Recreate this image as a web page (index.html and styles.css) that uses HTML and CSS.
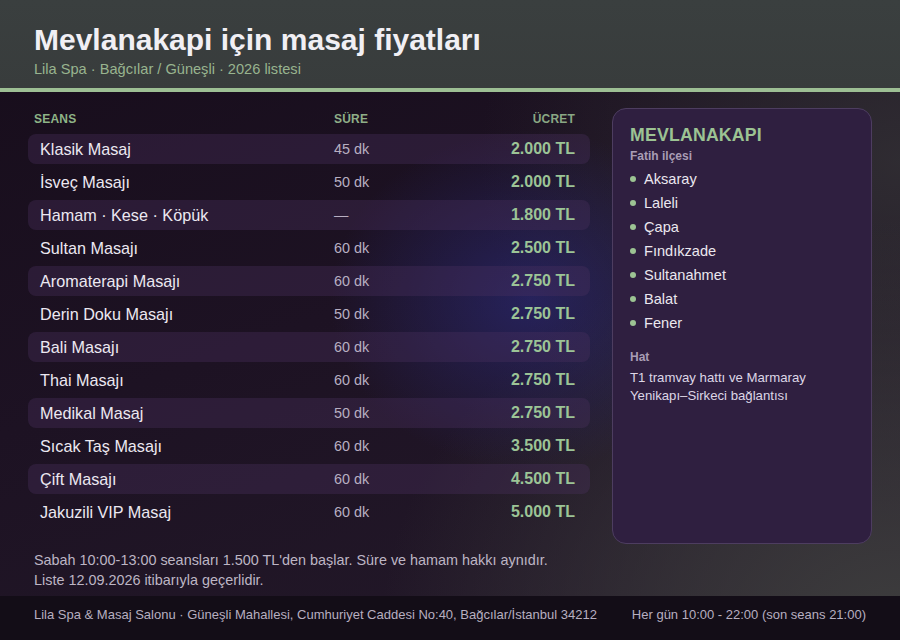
FILE: index.html
```html
<!DOCTYPE html>
<html lang="tr">
<head>
<meta charset="utf-8">
<title>Mevlanakapi için masaj fiyatları</title>
<link rel="stylesheet" href="styles.css">
</head>
<body>
<div class="page">
  <header class="top">
    <h1 class="title">Mevlanakapi için masaj fiyatları</h1>
    <p class="subtitle">Lila Spa · Bağcılar / Güneşli · 2026 listesi</p>
  </header>
  <main class="main">
    <div class="grid">
      <section class="prices">
        <div class="thead">
          <span class="c-name">SEANS</span>
          <span class="c-dur">SÜRE</span>
          <span class="c-price">ÜCRET</span>
        </div>
        <div class="rows">
          <div class="row alt"><span class="c-name">Klasik Masaj</span><span class="c-dur">45 dk</span><span class="c-price">2.000 TL</span></div>
          <div class="row"><span class="c-name">İsveç Masajı</span><span class="c-dur">50 dk</span><span class="c-price">2.000 TL</span></div>
          <div class="row alt"><span class="c-name">Hamam · Kese · Köpük</span><span class="c-dur">—</span><span class="c-price">1.800 TL</span></div>
          <div class="row"><span class="c-name">Sultan Masajı</span><span class="c-dur">60 dk</span><span class="c-price">2.500 TL</span></div>
          <div class="row alt"><span class="c-name">Aromaterapi Masajı</span><span class="c-dur">60 dk</span><span class="c-price">2.750 TL</span></div>
          <div class="row"><span class="c-name">Derin Doku Masajı</span><span class="c-dur">50 dk</span><span class="c-price">2.750 TL</span></div>
          <div class="row alt"><span class="c-name">Bali Masajı</span><span class="c-dur">60 dk</span><span class="c-price">2.750 TL</span></div>
          <div class="row"><span class="c-name">Thai Masajı</span><span class="c-dur">60 dk</span><span class="c-price">2.750 TL</span></div>
          <div class="row alt"><span class="c-name">Medikal Masaj</span><span class="c-dur">50 dk</span><span class="c-price">2.750 TL</span></div>
          <div class="row"><span class="c-name">Sıcak Taş Masajı</span><span class="c-dur">60 dk</span><span class="c-price">3.500 TL</span></div>
          <div class="row alt"><span class="c-name">Çift Masajı</span><span class="c-dur">60 dk</span><span class="c-price">4.500 TL</span></div>
          <div class="row"><span class="c-name">Jakuzili VIP Masaj</span><span class="c-dur">60 dk</span><span class="c-price">5.000 TL</span></div>
        </div>
      </section>
      <aside class="card">
        <h2 class="card-title">MEVLANAKAPI</h2>
        <p class="card-sub">Fatih ilçesi</p>
        <ul class="places">
          <li>Aksaray</li>
          <li>Laleli</li>
          <li>Çapa</li>
          <li>Fındıkzade</li>
          <li>Sultanahmet</li>
          <li>Balat</li>
          <li>Fener</li>
        </ul>
        <p class="card-label">Hat</p>
        <p class="card-text">T1 tramvay hattı ve Marmaray Yenikapı–Sirkeci bağlantısı</p>
      </aside>
    </div>
    <div class="notes">
      <p>Sabah 10:00-13:00 seansları 1.500 TL'den başlar. Süre ve hamam hakkı aynıdır.</p>
      <p>Liste 12.09.2026 itibarıyla geçerlidir.</p>
    </div>
  </main>
  <footer class="foot">
    <span>Lila Spa &amp; Masaj Salonu · Güneşli Mahallesi, Cumhuriyet Caddesi No:40, Bağcılar/İstanbul 34212</span>
    <span>Her gün 10:00 - 22:00 (son seans 21:00)</span>
  </footer>
</div>
</body>
</html>
```

FILE: styles.css
```css
* { box-sizing: border-box; }
html, body { margin: 0; padding: 0; }
body {
  width: 900px;
  height: 640px;
  overflow: hidden;
  font-family: "Liberation Sans", Arial, sans-serif;
  color: #ece8f0;
  background:
    radial-gradient(ellipse 200px 170px at 530px 300px, rgba(44, 44, 128, 0.6), rgba(44, 44, 128, 0) 100%),
    radial-gradient(ellipse 520px 420px at 100% 100%, rgba(62, 62, 62, 1) 0%, rgba(62, 62, 62, 0.6) 45%, rgba(62, 62, 62, 0) 100%),
    radial-gradient(ellipse 420px 360px at 100% 25%, rgba(50, 48, 52, 0.85), rgba(50, 48, 52, 0) 100%),
    linear-gradient(160deg, #170d1b 0%, #1d1223 45%, #241a2a 100%);
}
.page {
  height: 640px;
  display: flex;
  flex-direction: column;
}
.top {
  height: 92px;
  padding: 22px 34px 0;
  background: linear-gradient(180deg, #3a3f3f 0%, #383c3c 100%);
  border-bottom: 4px solid #9dbf94;
}
.title {
  margin: 0;
  font-size: 30px;
  line-height: 36px;
  font-weight: 700;
  color: #f1eff4;
}
.subtitle {
  margin: 2px 0 0;
  font-size: 14.6px;
  line-height: 18px;
  color: #98b48f;
}
.main {
  flex: 1;
  display: flex;
  flex-direction: column;
  padding: 16px 28px 6px;
}
.grid {
  flex: 1;
  display: grid;
  grid-template-columns: 1fr 260px;
  gap: 22px;
}
.thead, .row {
  display: grid;
  grid-template-columns: 294px 1fr 120px;
  align-items: center;
  padding: 0 15px 0 12px;
}
.thead {
  height: 20px;
  padding-top: 1px;
  padding-left: 6px;
  grid-template-columns: 300px 1fr 120px;
  font-size: 12px;
  font-weight: 700;
  color: #8eb487;
  letter-spacing: 0.2px;
}
.thead .c-dur { color: #8fae88; }
.thead .c-price { color: #8aa784; }
.c-price { text-align: right; }
.rows {
  margin-top: 6px;
  display: flex;
  flex-direction: column;
  gap: 3px;
}
.row {
  height: 30px;
  border-radius: 8px;
}
.row.alt {
  background: rgba(76, 50, 98, 0.34);
}
.row .c-name {
  font-size: 16.2px;
  color: #ece8f1;
}
.row .c-dur {
  font-size: 14.4px;
  color: #b8afc2;
}
.row .c-price {
  font-size: 16px;
  font-weight: 700;
  color: #9cc496;
}
.card {
  background: #2f1f40;
  border: 1px solid #4d3d60;
  border-radius: 14px;
  padding: 15px 17px;
}
.card-title {
  margin: 0;
  font-size: 17.7px;
  line-height: 22px;
  font-weight: 700;
  color: #9cc393;
  letter-spacing: 0.2px;
}
.card-sub {
  margin: 2px 0 0;
  font-size: 12px;
  line-height: 16px;
  font-weight: 700;
  color: #a99db5;
}
.places {
  list-style: none;
  margin: 3px 0 0;
  padding: 0;
}
.places li {
  display: flex;
  align-items: center;
  gap: 8px;
  font-size: 14.6px;
  line-height: 24px;
  color: #ebe7ef;
}
.places li::before {
  content: "";
  width: 6px;
  height: 6px;
  border-radius: 50%;
  background: #9cc393;
}
.card-label {
  margin: 14px 0 0;
  font-size: 12px;
  line-height: 16px;
  font-weight: 700;
  color: #a99db5;
}
.card-text {
  margin: 4px 0 0;
  font-size: 13.2px;
  line-height: 18px;
  color: #ddd6e6;
}
.notes {
  margin-top: 6px;
  padding-left: 6px;
}
.notes p {
  margin: 0;
  font-size: 14.4px;
  line-height: 20px;
  color: #bdb5c4;
}
.foot {
  height: 44px;
  padding: 11px 34px 0;
  display: flex;
  justify-content: space-between;
  font-size: 13px;
  line-height: 16px;
  color: #b7afc0;
  background: #130d17;
}
```
